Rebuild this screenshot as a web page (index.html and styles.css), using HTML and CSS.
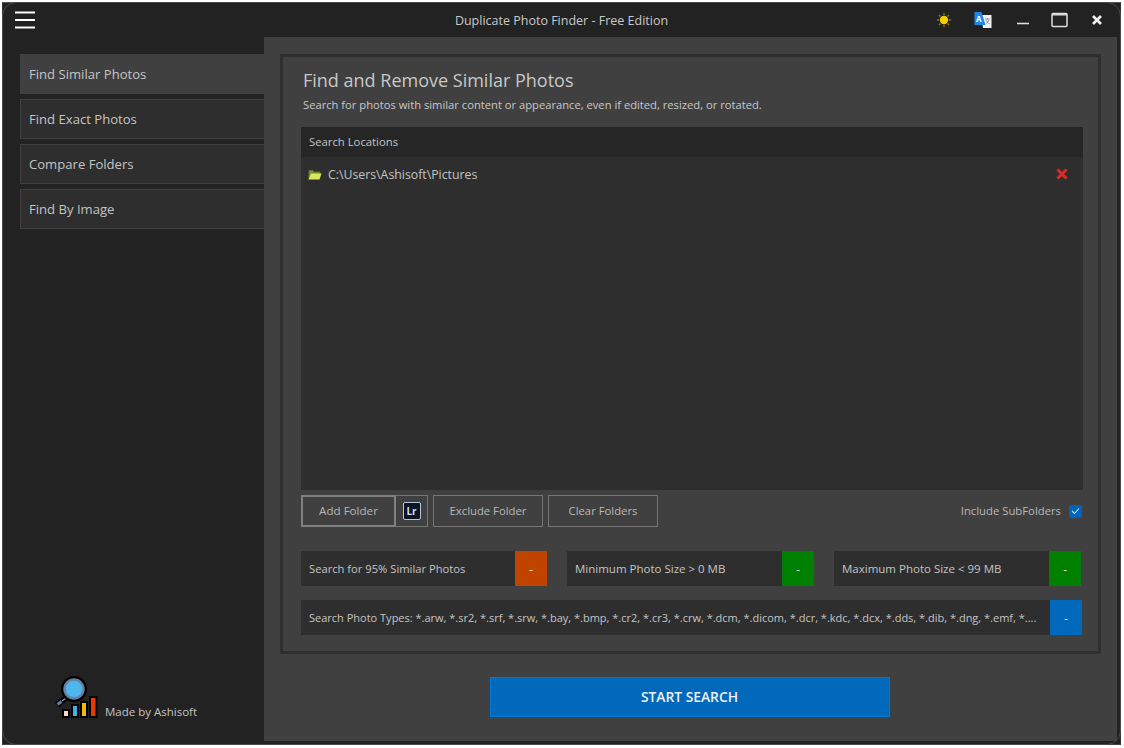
FILE: index.html
```html
<!DOCTYPE html>
<html lang="en">
<head>
  <meta charset="UTF-8">
  <title>Duplicate Photo Finder - Free Edition</title>
  <link rel="stylesheet" href="styles.css">
</head>
<body>
  <div class="window">
    <!-- title bar -->
    <header class="titlebar">
      <div class="titlebar-left">
        <svg class="hamburger" width="20" height="18" viewBox="0 0 20 18"><path d="M0 1.500h20M0 9h20M0 16.500h20" stroke="#fff" stroke-width="2"/></svg>
      </div>
      <div class="app-title">Duplicate Photo Finder - Free Edition</div>
      <div class="titlebar-right">
        <span class="tb-btn tb-sun">
          <svg width="16" height="16" viewBox="0 0 16 16"><circle cx="8" cy="8" r="4.200" fill="#f2cf00"/><path d="M8 1v2M8 13v2M1 8h2M13 8h2M3 3l1.400 1.400M11.600 11.600L13 13M13 3l-1.400 1.400M4.400 11.600L3 13" stroke="#8f7a10" stroke-width="1.400"/></svg>
        </span>
        <span class="tb-btn">
          <svg width="18" height="16" viewBox="0 0 18 16"><path d="M7 3h10.500v13H9z" fill="#f2f2f2"/><path d="M11 7h5M13.500 6v1.500M12 8c1 2 2 3 3.500 3.500M15 8c-.6 1.500-1.500 2.700-3 3.500" stroke="#999" stroke-width="1" fill="none"/><path d="M0.500 0H7.500L11.500 13H0.500z" fill="#1e88e5"/><text class="tr-letter" x="4.700" y="9.500">A</text></svg>
        </span>
        <span class="tb-btn tb-min">
          <svg width="14" height="14" viewBox="0 0 14 14"><path d="M1 10.500h12" stroke="#ddd" stroke-width="1.600"/></svg>
        </span>
        <span class="tb-btn tb-max">
          <svg width="18" height="16" viewBox="0 0 18 16"><rect x="1" y="1.500" width="15" height="13" rx="1" fill="none" stroke="#ddd" stroke-width="1.500"/><path d="M1 2.500h15" stroke="#ddd" stroke-width="2"/></svg>
        </span>
        <span class="tb-btn">
          <svg width="12" height="12" viewBox="0 0 12 12"><path d="M2 2l8 8M10 2l-8 8" stroke="#f0f0f0" stroke-width="2.600"/></svg>
        </span>
      </div>
    </header>

    <div class="body-row">
      <!-- left menu -->
      <aside class="sidebar">
        <nav class="menu">
          <div class="menu-item active">Find Similar Photos</div>
          <div class="menu-item">Find Exact Photos</div>
          <div class="menu-item">Compare Folders</div>
          <div class="menu-item">Find By Image</div>
        </nav>
        <div class="made-by">
          <svg width="43" height="43" viewBox="0 0 43 43">
            <path d="M2 30l9-7" stroke="#000" stroke-width="6"/>
            <path d="M2.500 29.500l4-3" stroke="#5d7fa3" stroke-width="3"/>
            <path d="M7 26l4-3" stroke="#9aa6b5" stroke-width="1.200"/>
            <circle cx="19" cy="14" r="13" fill="#000"/>
            <circle cx="19" cy="14" r="9.500" fill="#4db8ee" stroke="#6a7fa8" stroke-width="2.500"/>
            <rect x="8" y="35" width="6" height="7" fill="#ffd5c8" stroke="#000" stroke-width="2"/>
            <rect x="17" y="30" width="6" height="12" fill="#3fb0ea" stroke="#000" stroke-width="2"/>
            <rect x="26" y="27" width="6" height="15" fill="#f5b800" stroke="#000" stroke-width="2"/>
            <rect x="35" y="22" width="6.500" height="20" fill="#e83a00" stroke="#000" stroke-width="2"/>
          </svg>
          <span>Made by Ashisoft</span>
        </div>
      </aside>

      <!-- main area -->
      <main class="main">
        <section class="panel">
          <h1>Find and Remove Similar Photos</h1>
          <p class="subtitle">Search for photos with similar content or appearance, even if edited, resized, or rotated.</p>

          <div class="locations">
            <div class="locations-head">Search Locations</div>
            <div class="locations-row">
              <svg class="folder" width="14" height="11" viewBox="0 0 14 11"><path d="M1 10V1.500h4l1 1.500h6v1.500" fill="#7d8c34" stroke="#66732b" stroke-width="1"/><path d="M0.500 10.500L3 4.500h10.500l-2 6z" fill="#d9e85c"/></svg>
              <span class="path">C:\Users\Ashisoft\Pictures</span>
              <svg class="remove" width="12" height="12" viewBox="0 0 12 12"><path d="M1.500 1.500l9 9M10.500 1.500l-9 9" stroke="#e02a28" stroke-width="3"/></svg>
            </div>
          </div>

          <div class="folder-btns">
            <button class="btn btn-focus">Add Folder</button>
            <button class="btn btn-lr"><span class="lr-icon">Lr</span></button>
            <button class="btn btn-exclude">Exclude Folder</button>
            <button class="btn btn-clear">Clear Folders</button>
            <label class="subfolders"><span class="subfolders-text">Include SubFolders</span>
              <span class="check"><svg width="9" height="8" viewBox="0 0 9 8"><path d="M1 4l2.500 2.500L8 1.500" fill="none" stroke="#cfe4f7" stroke-width="1.100"/></svg></span>
            </label>
          </div>

          <div class="options">
            <div class="option opt-first"><span>Search for 95% Similar Photos</span><b class="opt-btn orange">-</b></div>
            <div class="option"><span>Minimum Photo Size &gt; 0 MB</span><b class="opt-btn green">-</b></div>
            <div class="option"><span>Maximum Photo Size &lt; 99 MB</span><b class="opt-btn green">-</b></div>
          </div>

          <div class="option types">
            <span>Search Photo Types: *.arw, *.sr2, *.srf, *.srw, *.bay, *.bmp, *.cr2, *.cr3, *.crw, *.dcm, *.dicom, *.dcr, *.kdc, *.dcx, *.dds, *.dib, *.dng, *.emf, *....</span>
            <b class="opt-btn blue">-</b>
          </div>
        </section>

        <div class="start-wrap">
          <button class="start-btn">START SEARCH</button>
        </div>
      </main>
    </div>
  </div>
</body>
</html>
```

FILE: styles.css
```css
body {
  margin: 0;
  background-color: #fff;
  font-family: "Open Sans", "Noto Sans", Arial, sans-serif;
  font-size: 11.300px;
  color: #c4c4c4;
}
.window {
  position: relative;
  width: 1119px;
  height: 743px;
  margin: 2px 0 0 2px;
  box-sizing: border-box;
  background-color: #222;
  border-top: 1px solid #555;
  border-right: 1px solid #333;
  border-bottom: 1px solid #444;
  border-left: 1px solid #333;
  display: flex;
  flex-direction: column;
}
/* rounded frame line, shows only in the corners */
.window::before {
  content: "";
  position: absolute;
  inset: -1px;
  border: 1px solid #4a4a4a;
  border-radius: 14px;
  pointer-events: none;
}
.titlebar {
  height: 34px;
  flex-shrink: 0;
  display: grid;
  grid-template-columns: 1fr auto 1fr;
  align-items: center;
}
.titlebar-left {
  padding-left: 12px;
  display: flex;
}
.app-title {
  font-size: 12.500px;
  color: #c8c8c8;
}
.titlebar-right {
  display: flex;
  justify-content: flex-end;
  padding-right: 4px;
}
.tb-btn {
  width: 38px;
  height: 34px;
  display: flex;
  align-items: center;
  justify-content: center;
}
.tb-sun {
  margin-right: 1px;
  margin-left: -1px;
}
.tb-min {
  margin-left: 2px;
  margin-right: -2px;
}
.tb-max {
  margin-left: 1px;
  margin-right: -1px;
}
.tr-letter {
  font-size: 8px;
  font-weight: bold;
  fill: #fff;
  text-anchor: middle;
}
.body-row {
  flex: 1;
  display: flex;
  min-height: 0;
}
.sidebar {
  width: 261px;
  flex-shrink: 0;
  padding: 17px 0 0 17px;
  box-sizing: border-box;
  display: flex;
  flex-direction: column;
}
.menu {
  display: flex;
  flex-direction: column;
  gap: 5px;
}
.menu-item {
  height: 40px;
  box-sizing: border-box;
  padding-left: 8px;
  display: flex;
  align-items: center;
  font-size: 13.100px;
  color: #c4c4c4;
  background-color: #2e2e2e;
  border: 1px solid #404040;
  border-right: none;
}
.menu-item.active {
  background-color: #404040;
}
.made-by {
  margin-top: auto;
  margin-bottom: 26px;
  margin-left: 35px;
  display: flex;
  align-items: flex-end;
  gap: 7px;
}
.made-by span {
  line-height: 16px;
  margin-bottom: -2px;
  font-size: 11.500px;
}
.main {
  flex: 1;
  min-width: 0;
  margin: 0 3px 3px 0;
  background-color: #404040;
  padding: 17px 16px 0;
  display: flex;
  flex-direction: column;
}
.panel {
  height: 600px;
  box-sizing: border-box;
  border: 3px solid #2f2f2f;
  padding: 11px 15px 0 18px;
}
h1 {
  margin: 0 0 0 2px;
  font-size: 18px;
  font-weight: normal;
  line-height: 24px;
  color: #c8c8c8;
}
.subtitle {
  margin: 4px 0 13px 2px;
  font-size: 11.200px;
  line-height: 18px;
  color: #c8c8c8;
}
.locations {
  height: 363px;
  background-color: #2e2e2e;
}
.locations-head {
  height: 30px;
  box-sizing: border-box;
  padding: 0 0 2px 8px;
  display: flex;
  align-items: center;
  background-color: #262626;
  color: #c4c4c4;
}
.locations-row {
  height: 34px;
  padding: 0 15px 0 8px;
  display: flex;
  align-items: center;
  gap: 5px;
}
.folder {
  margin-left: -1px;
  margin-right: 1px;
}
.path {
  font-size: 12.300px;
}
.remove {
  margin-left: auto;
}
.folder-btns {
  margin-top: 5px;
  height: 32px;
  display: flex;
  align-items: stretch;
}
.btn {
  font-family: inherit;
  font-size: 11.300px;
  color: #b8b8b8;
  background-color: #404040;
  border: 1px solid #757575;
  padding: 0 0 2px;
}
.btn-focus {
  width: 95px;
  border: 2px solid #808080;
  font-size: 11.600px;
}
.btn-lr {
  width: 32px;
  padding: 0;
  border-left: none;
  display: flex;
  align-items: center;
  justify-content: center;
}
.lr-icon {
  width: 18px;
  height: 18px;
  box-sizing: border-box;
  display: flex;
  align-items: center;
  justify-content: center;
  background-color: #0a1622;
  border: 1px solid #b9c3e6;
  border-radius: 2px;
  font-size: 10px;
  font-weight: bold;
  color: #d5dcf5;
}
.btn-exclude {
  width: 110px;
  margin-left: 5px;
}
.btn-clear {
  width: 110px;
  margin-left: 5px;
}
.subfolders {
  margin-left: auto;
  margin-right: 1px;
  display: flex;
  align-items: center;
  gap: 8px;
  color: #b8b8b8;
}
.subfolders-text {
  margin-bottom: 2px;
}
.check {
  width: 13px;
  height: 13px;
  border-radius: 2px;
  background-color: #0063bd;
  display: flex;
  align-items: center;
  justify-content: center;
}
.options {
  margin-top: 24px;
  display: flex;
  gap: 20px;
  padding-right: 2px;
}
.option {
  flex: 1;
  min-width: 0;
  height: 35px;
  display: flex;
  align-items: center;
  justify-content: space-between;
  background-color: #2e2e2e;
  padding-left: 8px;
  white-space: nowrap;
}
.options .option {
  font-size: 11.500px;
}
.options .opt-first {
  flex: none;
  width: 246px;
  box-sizing: border-box;
  font-size: 11.200px;
}
.types {
  margin-top: 14px;
  margin-right: 1px;
  font-size: 11px;
}
.opt-btn {
  width: 32px;
  height: 35px;
  flex-shrink: 0;
  display: flex;
  align-items: center;
  justify-content: center;
  font-weight: normal;
  color: #fff;
}
.orange {
  background-color: #c04400;
}
.green {
  background-color: #008000;
}
.blue {
  background-color: #0069bb;
}
.start-wrap {
  display: flex;
  justify-content: center;
  margin-top: 23px;
  padding-right: 2px;
}
.start-btn {
  width: 400px;
  height: 40px;
  padding: 0 0 2px;
  font-family: inherit;
  font-size: 13.800px;
  font-weight: 600;
  color: #f0f0f0;
  background-color: #0069bb;
  border: 1px solid #0078d7;
}
```
